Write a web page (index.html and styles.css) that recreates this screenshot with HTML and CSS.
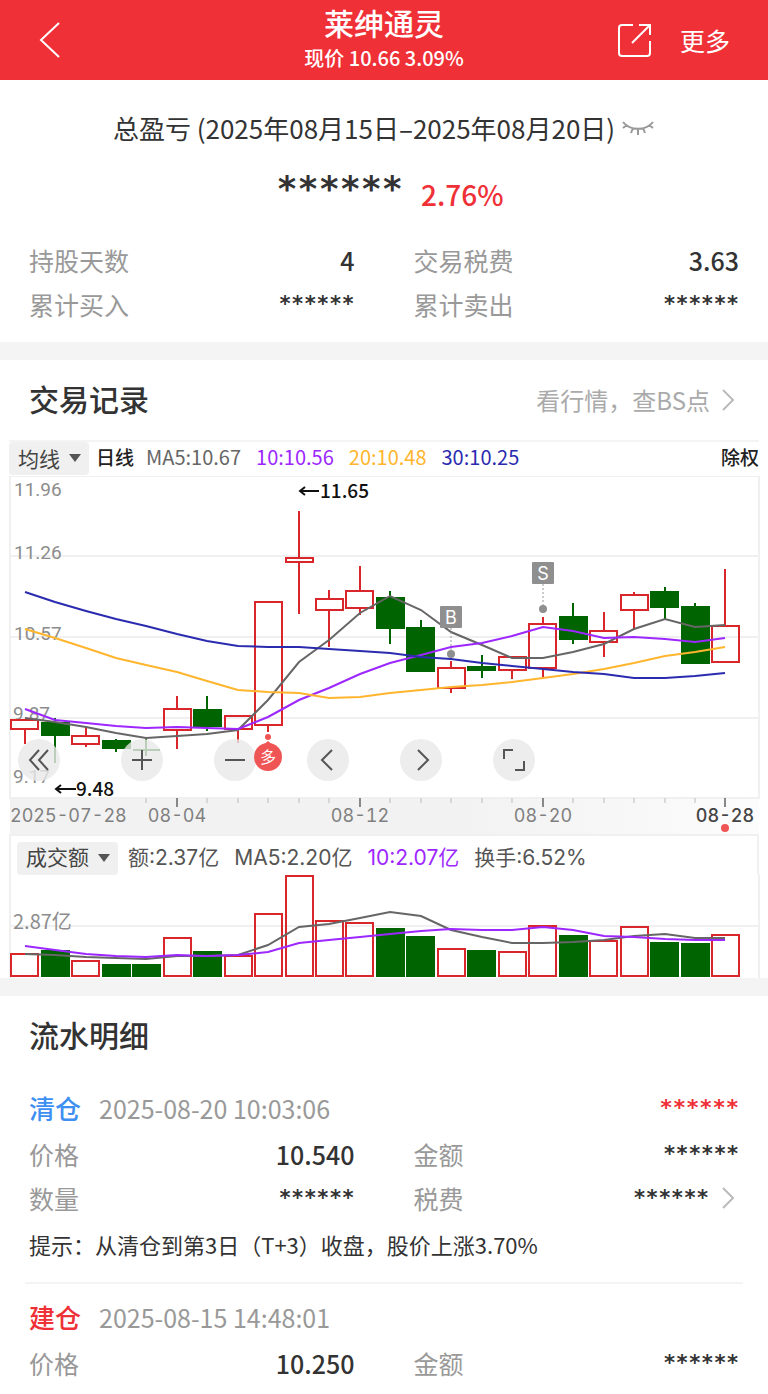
FILE: index.html
```html
<!DOCTYPE html>
<html lang="zh-CN">

<head>
    <meta charset="UTF-8">
    <meta name="viewport" content="width=device-width, initial-scale=1.0">
    <title>莱绅通灵</title>
    <link rel="stylesheet" href="styles.css">
</head>

<body>
    <header class="top-bar">
        <button class="back" aria-label="返回">
            <svg width="24" height="40" viewBox="0 0 24 40"><path d="M21 3 3 20l18 17" /></svg>
        </button>
        <div class="stock">
            <h1>莱绅通灵</h1>
            <p>现价 10.66 3.09%</p>
        </div>
        <div class="actions">
            <button aria-label="分享">
                <svg width="36" height="36" viewBox="0 0 36 36"><path d="M17 3H6a3 3 0 0 0-3 3v25a3 3 0 0 0 3 3h25a3 3 0 0 0 3-3V19M23 3h11v10M34 3 16 21" /></svg>
            </button>
            <button class="more">更多</button>
        </div>
    </header>

    <main>
        <section class="summary">
            <div class="period">
                <span>总盈亏 (2025年08月15日–2025年08月20日)</span>
                <button class="eye" aria-label="显示金额">
                    <svg width="34" height="20" viewBox="0 0 34 20"><path d="M2 4c7 9 23 9 30 0M6 7l-4 3M12 10l-2 5M17 11v6M22 10l2 5M28 7l4 3" /></svg>
                </button>
            </div>
            <div class="profit">
                <span class="masked big">******</span>
                <span class="rate">2.76%</span>
            </div>
            <dl class="stats">
                <div><dt>持股天数</dt><dd>4</dd></div>
                <div><dt>交易税费</dt><dd>3.63</dd></div>
                <div><dt>累计买入</dt><dd class="masked">******</dd></div>
                <div><dt>累计卖出</dt><dd class="masked">******</dd></div>
            </dl>
        </section>

        <section class="trades">
            <div class="section-head">
                <h2>交易记录</h2>
                <a href="#">看行情，查BS点
                    <svg class="chevron" width="12" height="24" viewBox="0 0 12 24"><path d="m1 2 10 10L1 22" /></svg>
                </a>
            </div>

            <div class="legend">
                <span class="picker">
                    <select aria-label="指标">
                        <option>均线</option>
                    </select>
                </span>
                <b>日线</b>
                <span class="ma5">MA5:10.67</span>
                <span class="ma10">10:10.56</span>
                <span class="ma20">20:10.48</span>
                <span class="ma30">30:10.25</span>
                <b class="adjust">除权</b>
            </div>

            <div class="kline">
                <svg viewBox="0 0 768 358">
                    <defs>
                        <linearGradient id="axisBg" x1="0" x2="1">
                            <stop offset="0.6" stop-color="#f2f2f2" />
                            <stop offset="1" stop-color="#fcfcfc" />
                        </linearGradient>
                    </defs>
                    <rect x="10" y="322" width="749" height="36" fill="url(#axisBg)" />
                    <path class="grid" d="M10 0V322H759V0zM10 80H759M10 161H759M10 242H759" />

                    <g class="scale">
                        <text x="14" y="20">11.96</text>
                        <text x="14" y="83">11.26</text>
                        <text x="14" y="164">10.57</text>
                        <text x="13" y="244">9.87</text>
                        <text x="13" y="307">9.17</text>
                    </g>

                    <!-- candles -->
                    <path class="up" d="M25 254V268M86 251V260M86 268V271M177 220V233M177 254V273M238 253V267M268 249V256M299 35V82M299 87V138M329 114V123M329 134V171M360 90V115M360 132V139M451 185V191M451 213V217M512 194V203M543 141V148M543 192V201M604 136V155M604 166V181M634 116V119M634 134V154M725 93V150" />
                    <path class="up" d="M11 244h27v9h-27zM72 260h27v8h-27zM164 233h27v21h-27zM225 240h27v13h-27zM255 126h27v123h-27zM286 82h27v4h-27zM316 123h27v11h-27zM346 115h27v17h-27zM438 192h27v20h-27zM499 181h27v13h-27zM529 148h27v44h-27zM590 155h27v11h-27zM621 119h27v15h-27zM712 150h27v36h-27z" />
                    <path class="down-wick" d="M55 242V287M116 263V276M146 262V280M207 220V255M390 115V168M421 144V196M482 179V202M573 127V168M665 111V143M695 127V187" />
                    <path class="down" d="M41 246h29v14h-29zM102 264h29v9h-29zM133 273h27v2h-27zM193 233h29v18h-29zM376 121h29v32h-29zM406 151h29v45h-29zM467 190h29v5h-29zM559 140h29v24h-29zM650 115h29v17h-29zM681 130h29v58h-29z" />

                    <polyline class="line ma5" points="25,242 55,246 86,251 116,257 146,262 177,260 207,258 238,254 268,224 299,186 329,164 360,137 390,120 421,134 451,156 482,169 512,182 543,182 573,176 604,168 634,153 665,143 695,151 725,149" />
                    <polyline class="line ma10" points="25,233 55,244 86,247 116,250 146,252 177,251 207,252 238,253 268,241 299,224 329,212 360,198 390,187 421,179 451,171 482,167 512,160 543,151 573,155 604,162 634,161 665,163 695,166 725,162" />
                    <polyline class="line ma20" points="25,153 55,162 86,172 116,182 146,189 177,196 207,205 238,214 268,216 299,217 329,222 360,221 390,217 421,214 451,211 482,209 512,206 543,202 573,198 604,193 634,187 665,180 695,176 725,171" />
                    <polyline class="line ma30" points="25,116 55,126 86,135 116,143 146,150 177,158 207,165 238,170 268,171 299,171 329,173 360,175 390,177 421,181 451,183 482,187 512,190 543,193 573,196 604,198 634,202 665,202 695,200 725,197" />

                    <!-- high and low -->
                    <path class="arrow" d="M319 15H300M305 11l-5 4 5 4M76 313H56M61 309l-5 4 5 4" />
                    <text class="peak" x="320" y="22">11.65</text>
                    <text class="peak" x="76" y="320">9.48</text>

                    <!-- buy and sell points -->
                    <g class="point">
                        <path d="M451 152V174M543 108V130" />
                        <circle cx="451" cy="178" r="4" />
                        <circle cx="543" cy="133" r="4" />
                        <rect x="440" y="130" width="22" height="22" rx="1" />
                        <rect x="532" y="86" width="22" height="22" rx="1" />
                        <text x="451" y="148">B</text>
                        <text x="543" y="104">S</text>
                    </g>

                    <!-- time axis -->
                    <path class="tick" d="M146 322v5M207 322v5M238 322v5M268 322v5M299 322v5M329 322v5M390 322v5M421 322v5M451 322v5M482 322v5M512 322v5M573 322v5M604 322v5M634 322v5M665 322v5M695 322v5" />
                    <path class="tick major" d="M177 322v9M360 322v9M543 322v9M725 322v9" />
                    <g class="dates">
                        <text x="10" y="346">2025-07-28</text>
                        <text x="177" y="346" class="mid">08-04</text>
                        <text x="360" y="346" class="mid">08-12</text>
                        <text x="543" y="346" class="mid">08-20</text>
                        <text x="725" y="346" class="mid today">08-28</text>
                    </g>
                    <circle class="red-dot" cx="725" cy="352" r="4" />
                </svg>

                <div class="controls">
                    <button aria-label="最早"><svg viewBox="0 0 42 42"><path d="M21 11 12 21l9 10M30 11l-9 10 9 10" /></svg></button>
                    <button aria-label="放大"><svg viewBox="0 0 42 42"><path d="M11 21h20M21 11v20" /></svg></button>
                    <button aria-label="缩小"><svg viewBox="0 0 42 42"><path d="M11 21h20" /></svg></button>
                    <button aria-label="上一根"><svg viewBox="0 0 42 42"><path d="m25 11-10 10 10 10" /></svg></button>
                    <button aria-label="下一根"><svg viewBox="0 0 42 42"><path d="m18 11 10 10-10 10" /></svg></button>
                    <button aria-label="全屏"><svg viewBox="0 0 42 42"><path d="M11 20v-9h9M31 22v9h-9" /></svg></button>
                </div>

                <svg class="long-mark" viewBox="0 0 30 38">
                    <circle cx="15" cy="4" r="3" />
                    <circle cx="15" cy="24" r="14" />
                    <path d="M9 13l6-5 6 5z" />
                    <text x="15" y="30">多</text>
                </svg>
            </div>

            <div class="volume">
                <div class="volume-legend">
                    <span class="picker">
                        <select aria-label="副图指标">
                            <option>成交额</option>
                        </select>
                    </span>
                    <span>额:2.37亿</span>
                    <span>MA5:2.20亿</span>
                    <span class="ma10">10:2.07亿</span>
                    <span>换手:6.52%</span>
                </div>
                <svg viewBox="0 40 768 104">
                    <path class="grid" d="M10 40V144M759 40V144M10 92H759" />
                    <text class="unit" x="13" y="95">2.87亿</text>
                    <path class="up" d="M11 120h27v22h-27zM72 127h27v15h-27zM164 104h27v38h-27zM225 122h27v20h-27zM255 80h27v62h-27zM286 42h27v100h-27zM316 87h27v55h-27zM346 89h27v53h-27zM438 115h27v27h-27zM499 118h27v24h-27zM529 92h27v50h-27zM590 107h27v35h-27zM621 93h27v49h-27zM712 101h27v41h-27z" />
                    <path class="down" d="M41 116h29v27h-29zM102 130h29v13h-29zM132 130h29v13h-29zM193 117h29v26h-29zM376 94h29v49h-29zM406 102h29v41h-29zM467 116h29v27h-29zM559 101h29v42h-29zM650 108h29v35h-29zM681 109h29v34h-29z" />
                    <polyline class="line ma5" points="25,120 55,121 86,123 116,124 146,125 177,122 207,122 238,121 268,111 299,93 329,90 360,84 390,78 421,82 451,96 482,103 512,109 543,109 573,108 604,106 634,102 665,100 695,104 725,104" />
                    <polyline class="line ma10" points="25,112 55,116 86,120 116,122 146,123 177,121 207,122 238,121 268,118 299,109 329,106 360,103 390,100 421,97 451,95 482,96 512,96 543,93 573,96 604,102 634,103 665,105 695,106 725,106" />
                </svg>
            </div>
        </section>

        <section class="details">
            <h2>流水明细</h2>
            <article>
                <div class="record-head">
                    <b class="close">清仓</b>
                    <time>2025-08-20 10:03:06</time>
                    <span class="masked gain">******</span>
                </div>
                <dl class="stats">
                    <div><dt>价格</dt><dd>10.540</dd></div>
                    <div><dt>金额</dt><dd class="masked">******</dd></div>
                    <div><dt>数量</dt><dd class="masked">******</dd></div>
                    <div><dt>税费</dt><dd class="masked">******</dd>
                        <svg class="chevron" width="12" height="24" viewBox="0 0 12 24"><path d="m1 2 10 10L1 22" /></svg>
                    </div>
                </dl>
                <p class="hint">提示：从清仓到第3日（T+3）收盘，股价上涨3.70%</p>
            </article>
            <article>
                <div class="record-head">
                    <b class="open">建仓</b>
                    <time>2025-08-15 14:48:01</time>
                </div>
                <dl class="stats">
                    <div><dt>价格</dt><dd>10.250</dd></div>
                    <div><dt>金额</dt><dd class="masked">******</dd></div>
                </dl>
            </article>
        </section>
    </main>
</body>

</html>
```
FILE: styles.css
```css
* {
    box-sizing: border-box;
}

body {
    font-family: 'Noto Sans CJK SC', sans-serif;
    font-size: 25px;
    margin: 0;
    background: #f4f4f4;
    color: #333;
}

h1,
h2,
p,
dl,
dd {
    margin: 0;
}

button {
    font: inherit;
    color: inherit;
    background: none;
    border: none;
    padding: 0;
    cursor: pointer;
}

svg {
    display: block;
    fill: none;
}

.top-bar {
    display: grid;
    grid-template-columns: 1fr auto 1fr;
    align-items: center;
    height: 80px;
    padding: 0 38px;
    background: #f03037;
    color: #fff;
}

.top-bar svg {
    stroke: #fff;
    stroke-width: 2;
}

.back {
    justify-self: start;
}

.stock {
    text-align: center;
    padding-bottom: 4px;
}

.stock h1 {
    font-size: 30px;
    font-weight: 500;
    line-height: 40px;
}

.stock p {
    font-size: 20px;
    font-weight: 500;
    line-height: 32px;
}

.actions {
    display: flex;
    justify-content: flex-end;
    align-items: center;
    gap: 28px;
}

.summary,
.trades,
.details {
    background: #fff;
}

.summary {
    padding: 27px 29px 16px;
    margin-bottom: 18px;
}

.period {
    display: flex;
    justify-content: center;
    align-items: center;
    gap: 6px;
    font-size: 26px;
    line-height: 42px;
}

.eye svg {
    stroke: #999;
    stroke-width: 2;
}

.profit {
    display: flex;
    justify-content: center;
    gap: 18px;
    height: 89px;
    padding: 24px 0 0 12px;
}

.rate {
    font-size: 28px;
    font-weight: 500;
    line-height: 42px;
    color: #f03037;
}

.masked,
.stats .masked {
    font-family: 'DejaVu Sans Mono', monospace;
    font-weight: bold;
    font-size: 21px;
}

.masked.big {
    font-size: 35px;
    line-height: 32px;
}

.stats {
    display: grid;
    grid-template-columns: 1fr 1fr;
    column-gap: 59px;
    line-height: 44px;
}

.stats div {
    display: flex;
    align-items: center;
    height: 44px;
}

.stats dt {
    color: #999;
    margin-right: auto;
}

.stats dd {
    font-weight: 500;
}

.chevron {
    stroke: #bbb;
    stroke-width: 2;
}

.stats .chevron {
    margin: 0 5px 0 13px;
}

h2 {
    font-size: 30px;
    font-weight: 500;
    line-height: 76px;
    padding-bottom: 4px;
}

.trades {
    margin-bottom: 18px;
}

.section-head {
    display: flex;
    justify-content: space-between;
    align-items: center;
    padding: 0 34px 0 29px;
}

.section-head a {
    display: flex;
    align-items: center;
    gap: 12px;
    font-size: 24px;
    line-height: 36px;
    color: #aaa;
    text-decoration: none;
}

.legend {
    display: flex;
    align-items: center;
    gap: 12px;
    height: 36px;
    margin: 0 9px;
    padding-bottom: 1px;
    border-top: 2px solid #f4f4f4;
    font-size: 20px;
    line-height: 28px;
    white-space: nowrap;
}

.legend span:not(.picker),
.legend b {
    padding-bottom: 4px;
}

.legend .ma5,
.legend .ma10,
.legend .ma20 {
    margin-right: 3px;
}

.legend b {
    font-size: 19px;
    font-weight: 500;
    color: #222;
}

.legend .picker {
    margin-right: -5px;
}

.legend .adjust {
    margin-left: auto;
}

.picker {
    position: relative;
}

.picker::after {
    content: "";
    position: absolute;
    right: 8px;
    top: 12px;
    border: 6px solid transparent;
    border-top: 8px solid #555;
    border-bottom: 0;
    pointer-events: none;
}

.picker select {
    appearance: none;
    display: block;
    height: 33px;
    padding: 0 29px 2px 9px;
    border: none;
    border-radius: 4px;
    background: #f0f0f0;
    color: #444;
    font-family: inherit;
    font-size: 21px;
}

.ma5 {
    color: #666;
    stroke: #666;
}

.ma10 {
    color: #9d27ff;
    stroke: #9d27ff;
}

.ma20 {
    color: #ffb52e;
    stroke: #ffb52e;
}

.ma30 {
    color: #2b2bb0;
    stroke: #2b2bb0;
}

.kline {
    position: relative;
}

.line {
    stroke-width: 2;
}

.grid {
    stroke: #f0f0f0;
    stroke-width: 2;
}

.up {
    stroke: #d9262b;
    stroke-width: 2;
}

.down {
    fill: #006400;
}

.down-wick {
    stroke: #006400;
    stroke-width: 2;
}

.scale {
    font-family: Roboto, sans-serif;
    font-size: 19px;
    fill: #8c8c8c;
}

.unit {
    font-size: 20px;
    fill: #8c8c8c;
}

.peak {
    fill: #111;
    font-size: 19px;
    font-weight: 500;
}

.arrow {
    stroke: #111;
    stroke-width: 2;
}

.point path {
    stroke: #999;
    stroke-dasharray: 2 2;
}

.point rect,
.point circle {
    fill: #8f8f8f;
}

.point text {
    font-family: Inter, sans-serif;
    font-size: 18px;
    fill: #fff;
    text-anchor: middle;
}

.tick {
    stroke: #bbb;
    stroke-width: 1;
}

.tick.major {
    stroke: #888;
    stroke-width: 2;
}

.dates {
    font-family: Inter, sans-serif;
    font-size: 18px;
    font-variant-numeric: tabular-nums;
    fill: #808080;
}

.mid {
    text-anchor: middle;
}

.today {
    fill: #444;
    font-weight: 500;
}

.red-dot {
    fill: #f05555;
}

.controls {
    position: absolute;
    left: 18px;
    bottom: 53px;
    display: flex;
    gap: 51px;
}

.controls button {
    width: 42px;
    height: 42px;
    border-radius: 50%;
    background: rgba(233, 233, 233, 0.8);
}

.controls button:first-child {
    margin-right: 10px;
}

.controls path {
    stroke: #555;
    stroke-width: 2;
}

.long-mark {
    position: absolute;
    left: 33%;
    bottom: 63px;
    width: 30px;
    height: 38px;
    fill: #f05555;
}

.long-mark text {
    fill: #fff;
    font-size: 16px;
    text-anchor: middle;
}

.volume-legend {
    display: flex;
    align-items: center;
    gap: 15px;
    height: 40px;
    margin: 0 9px;
    padding: 6px 0 0 6px;
    border: 2px solid #f0f0f0;
    border-bottom: none;
    font-family: Inter, 'Noto Sans CJK SC', sans-serif;
    font-size: 21px;
    line-height: 28px;
    color: #555;
    white-space: nowrap;
}

.volume-legend .picker {
    margin-right: -5px;
}

.details {
    padding: 0 25px;
}

.details h2 {
    padding-left: 4px;
}

.details article {
    padding: 7px 4px 14px;
}

.details article + article {
    padding-top: 8px;
    border-top: 2px solid #f4f4f4;
}

.record-head {
    display: flex;
    align-items: center;
    gap: 18px;
    height: 49px;
}

.record-head b {
    font-size: 26px;
    font-weight: 500;
}

.record-head time {
    color: #999;
}

.close {
    color: #3d8ff2;
}

.open,
.gain {
    color: #f03037;
}

.record-head .gain {
    margin-left: auto;
    font-size: 22px;
}

.hint {
    font-size: 22px;
    line-height: 48px;
}
```
